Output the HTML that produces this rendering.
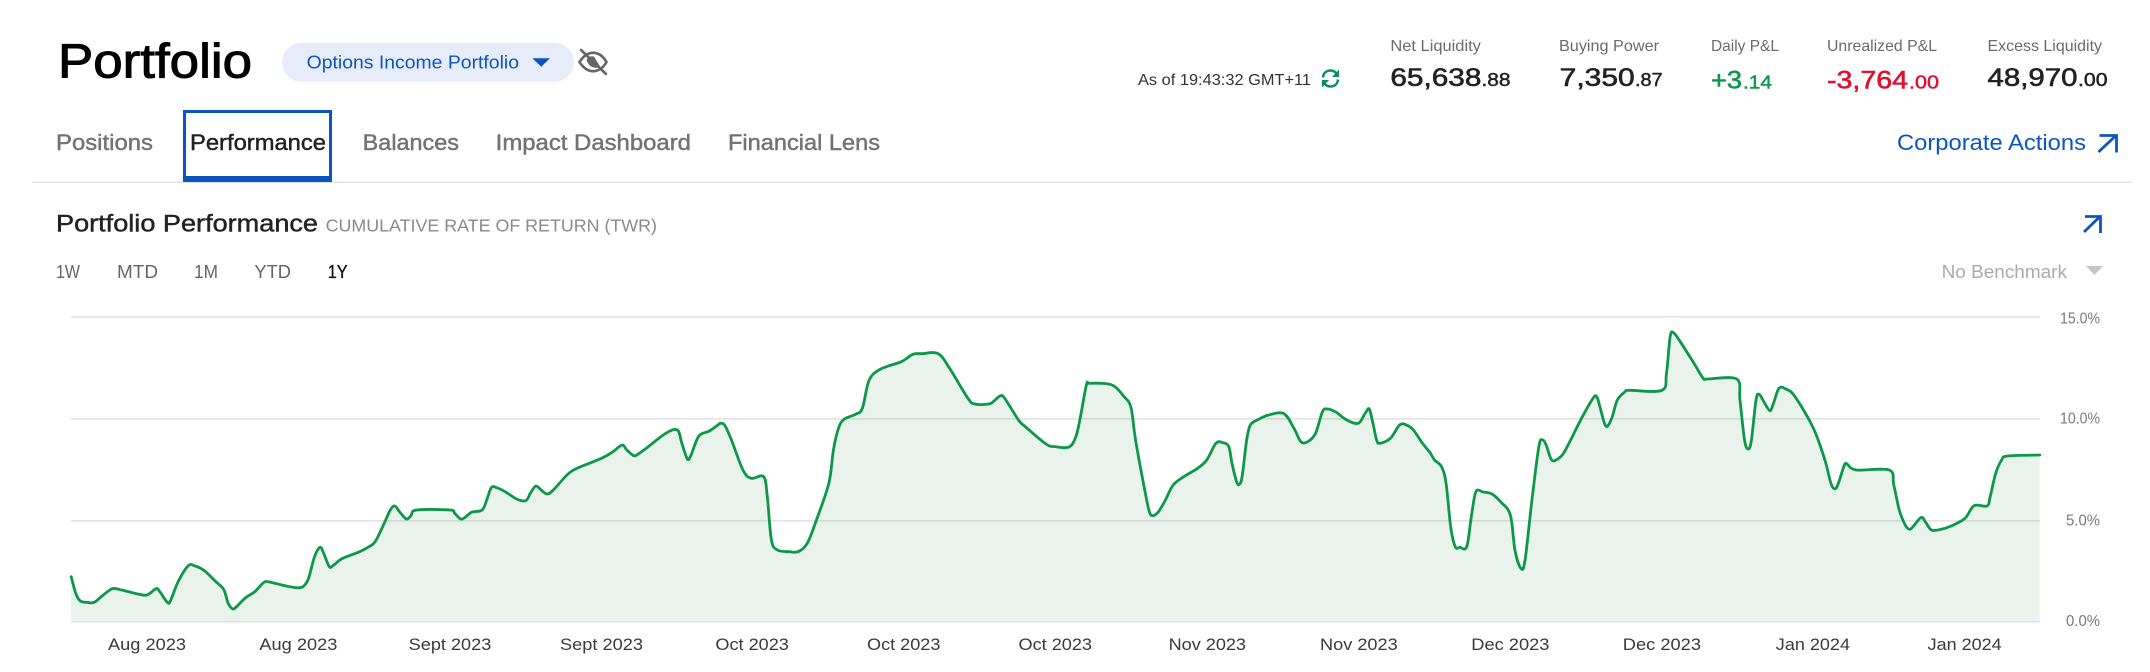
<!DOCTYPE html>
<html lang="en">
<head>
<meta charset="utf-8">
<title>Portfolio</title>
<style>
html,body{margin:0;padding:0;background:#fff;width:2150px;height:672px;overflow:hidden}
svg{display:block}
text{font-family:"Liberation Sans",Arial,sans-serif;white-space:pre}
.tab{font-size:22px;fill:#737373;stroke:#737373;stroke-width:.45px}
.rng{font-size:18px;fill:#666}
.lab{font-size:16px;fill:#6b6b6b}
.big{font-size:25px;fill:#222;stroke:#222;stroke-width:.6px}
.sm{font-size:18px;fill:#222;stroke:#222;stroke-width:.45px}
.xl{font-size:17px;fill:#3a3a3a}
.yl{font-size:16px;fill:#7a7a7a}
.c{fill:#e9f3ec;stroke:none}
.l{fill:none;stroke:#0c9848;stroke-width:2.8px;stroke-linejoin:round;stroke-linecap:round;vector-effect:non-scaling-stroke}
</style>
</head>
<body>
<svg xmlns="http://www.w3.org/2000/svg" width="2150" height="672" viewBox="0 0 2150 672">
<rect width="2150" height="672" fill="#fff"/>

<!-- Header -->
<text x="58" y="77.3" font-size="48" fill="#000" stroke="#000" stroke-width="1" textLength="194" lengthAdjust="spacingAndGlyphs">Portfolio</text>
<rect x="282" y="42.7" width="292" height="39" rx="19.5" fill="#e7edf8"/>
<text x="306.7" y="68.3" font-size="18.5" fill="#0b55c0" textLength="212.3" lengthAdjust="spacingAndGlyphs">Options Income Portfolio</text>
<path d="M532.3 58.3H550L541.2 66.8Z" fill="#0b55c0"/>
<!-- hidden eye -->
<g fill="none" stroke="#666" stroke-width="2.6" stroke-linecap="round">
<path d="M579.5 62C584 55 588.5 52.8 593 52.8C597.5 52.8 602.5 55 606.5 62C602.5 69 597.5 71.2 593 71.2C588.5 71.2 584 69 579.5 62Z"/>
<path d="M581 50L606 74"/>
</g>
<path d="M586.5 60C588 56.5 591 56 594 56.5L600 66.5C596 69 589 68 586.5 60Z" fill="#666"/>

<!-- As of -->
<text x="1138" y="85" font-size="15.5" fill="#333" textLength="173" lengthAdjust="spacingAndGlyphs">As of 19:43:32 GMT+11</text>
<g fill="none" stroke="#0e8a6e" stroke-width="2.5">
<path d="M1323 77.5C1323.5 72.5 1327 70.5 1330.500 70.5C1333 70.5 1335 71.500 1336.5 73.5"/>
<path d="M1338 79.5C1337.5 84.5 1334 86.5 1330.5 86.5C1328 86.5 1326 85.5 1324.5 83.5"/>
</g>
<path d="M1339 69.5V77H1332Z M1322 87.5V80H1329Z" fill="#0e8a6e"/>

<!-- Metrics -->
<text class="lab" x="1390.4" y="51" textLength="90.5" lengthAdjust="spacingAndGlyphs">Net Liquidity</text>
<text class="big" x="1390.4" y="86" textLength="91" lengthAdjust="spacingAndGlyphs">65,638</text>
<text class="sm" x="1481.5" y="86" textLength="29" lengthAdjust="spacingAndGlyphs">.88</text>

<text class="lab" x="1559" y="51" textLength="100" lengthAdjust="spacingAndGlyphs">Buying Power</text>
<text class="big" x="1559.7" y="86" textLength="75" lengthAdjust="spacingAndGlyphs">7,350</text>
<text class="sm" x="1635" y="86" textLength="27.6" lengthAdjust="spacingAndGlyphs">.87</text>

<text class="lab" x="1711" y="51" textLength="68" lengthAdjust="spacingAndGlyphs">Daily P&amp;L</text>
<text class="big" x="1711" y="88.3" style="fill:#0c9848;stroke:#0c9848" textLength="31" lengthAdjust="spacingAndGlyphs">+3</text>
<text class="sm" x="1743" y="88.3" style="fill:#0c9848;stroke:#0c9848" textLength="29" lengthAdjust="spacingAndGlyphs">.14</text>

<text class="lab" x="1827" y="51" textLength="110" lengthAdjust="spacingAndGlyphs">Unrealized P&amp;L</text>
<text class="big" x="1827" y="88.3" style="fill:#e0102f;stroke:#e0102f" textLength="81" lengthAdjust="spacingAndGlyphs">-3,764</text>
<text class="sm" x="1909" y="88.3" style="fill:#e0102f;stroke:#e0102f" textLength="30" lengthAdjust="spacingAndGlyphs">.00</text>

<text class="lab" x="1987.5" y="51" textLength="114.5" lengthAdjust="spacingAndGlyphs">Excess Liquidity</text>
<text class="big" x="1987.5" y="86" textLength="90" lengthAdjust="spacingAndGlyphs">48,970</text>
<text class="sm" x="2078" y="86" textLength="29.5" lengthAdjust="spacingAndGlyphs">.00</text>

<!-- Tabs -->
<text class="tab" x="56" y="150" textLength="97" lengthAdjust="spacingAndGlyphs">Positions</text>
<text class="tab" x="190" y="150" style="fill:#222;stroke:#222" textLength="136" lengthAdjust="spacingAndGlyphs">Performance</text>
<text class="tab" x="362.7" y="150" textLength="96.3" lengthAdjust="spacingAndGlyphs">Balances</text>
<text class="tab" x="495.7" y="150" textLength="195.3" lengthAdjust="spacingAndGlyphs">Impact Dashboard</text>
<text class="tab" x="728" y="150" textLength="152" lengthAdjust="spacingAndGlyphs">Financial Lens</text>
<rect x="32" y="181.5" width="2100" height="1.5" fill="#e4e4e4"/>
<path d="M183 110H332V182H183Z M186 113V176H329V113Z" fill="#0b55c0" fill-rule="evenodd"/>

<text x="1897" y="150" font-size="22.5" fill="#0b55c0" textLength="189" lengthAdjust="spacingAndGlyphs">Corporate Actions</text>
<g fill="none" stroke="#0b55c0" stroke-width="2.8">
<path d="M2098.5 152L2116 135.5M2099.5 135.5H2116.5V152.5"/>
<path d="M2084 232L2100 216.5M2085 216.5H2100.5V233"/>
</g>

<!-- Section heading -->
<text x="56" y="231.7" font-size="24" fill="#222" stroke="#222" stroke-width=".45" textLength="262" lengthAdjust="spacingAndGlyphs">Portfolio Performance</text>
<text x="325.6" y="231.7" font-size="17.5" fill="#8a8a8a" textLength="331.4" lengthAdjust="spacingAndGlyphs">CUMULATIVE RATE OF RETURN (TWR)</text>

<text class="rng" x="56" y="278" textLength="24" lengthAdjust="spacingAndGlyphs">1W</text>
<text class="rng" x="117" y="278" textLength="41" lengthAdjust="spacingAndGlyphs">MTD</text>
<text class="rng" x="194" y="278" textLength="24" lengthAdjust="spacingAndGlyphs">1M</text>
<text class="rng" x="254.4" y="278" textLength="36.6" lengthAdjust="spacingAndGlyphs">YTD</text>
<text class="rng" x="327.7" y="278" style="fill:#111;stroke:#111;stroke-width:.3px" textLength="20" lengthAdjust="spacingAndGlyphs">1Y</text>

<text x="1941.6" y="278" font-size="18" fill="#aaa" textLength="125.4" lengthAdjust="spacingAndGlyphs">No Benchmark</text>
<path d="M2086 266H2103L2094.5 275Z" fill="#c6c6c6"/>

<!-- Chart fill -->
<g transform="translate(0,300) scale(.45918,.33333)">
<polygon class="c" points="155,830 165,880 175,903 190,907 205,907 225,885 245,866 265,870 300,882 320,885 340,866 348,875 365,908 372,900 388,845 410,797 425,798 445,812 470,845 487,868 497,910 507,927 515,920 535,893 555,875 575,847 590,847 620,857 645,863 660,860 672,835 685,770 697,742 705,760 717,800 725,797 745,776 780,757 800,743 817,725 835,675 850,630 860,618 870,635 885,657 895,647 907,630 980,630 990,640 1003,657 1012,653 1027,637 1050,630 1060,600 1070,563 1082,563 1100,575 1125,597 1145,602 1155,580 1167,558 1180,572 1192,582 1205,570 1237,522 1260,503 1310,475 1335,455 1355,435 1365,450 1380,467 1390,462 1410,442 1450,400 1475,390 1485,430 1497,477 1505,465 1522,408 1545,393 1570,370 1570,966 155,966"/>
</g>
<g transform="translate(720,300) scale(.45918,.33333)">
<polygon class="c" points="0,370 10,375 25,420 50,510 68,535 95,530 103,590 112,720 125,750 150,755 170,755 190,730 210,660 237,550 247,450 258,385 270,358 295,343 310,325 325,240 350,207 395,185 420,163 440,161 475,161 500,205 540,295 555,312 585,312 595,305 610,288 620,295 650,360 665,380 710,432 730,440 760,441 775,410 785,350 798,255 805,250 840,251 860,260 880,290 895,322 905,420 925,570 935,635 943,647 955,635 970,600 987,555 1010,530 1040,505 1060,480 1080,430 1095,428 1108,440 1115,490 1125,545 1131,553 1137,530 1147,420 1155,375 1170,360 1195,345 1228,341 1250,385 1265,425 1280,425 1297,400 1312,335 1322,327 1340,335 1365,360 1390,370 1405,340 1414,327 1422,370 1430,420 1437,430 1460,415 1480,375 1495,375 1510,390 1530,430 1548,460 1548,966 0,966"/>
</g>
<g transform="translate(1430,300) scale(.45918,.33333)">
<polygon class="c" points="0,457 10,480 25,500 35,550 45,680 55,740 65,742 80,740 90,650 100,575 115,576 135,582 155,607 175,645 185,750 198,805 207,780 222,600 237,440 245,420 253,435 265,480 280,475 295,450 330,355 355,295 363,290 370,320 380,370 387,378 397,350 408,300 425,275 435,271 505,271 515,220 523,110 530,98 545,125 575,190 595,235 605,237 668,237 675,300 685,420 693,447 700,420 710,300 717,283 727,305 740,332 748,310 760,265 775,267 795,290 835,385 860,480 872,545 880,566 888,555 902,497 908,492 928,510 1000,510 1010,555 1022,630 1035,675 1045,688 1055,675 1070,652 1080,668 1092,690 1110,689 1135,678 1165,655 1185,617 1213,618 1220,590 1232,520 1245,480 1258,468 1328,465 1328,966 0,966"/>
</g>

<!-- Grid -->
<rect x="71" y="316" width="1969" height="1.7" fill="#000" fill-opacity=".105"/>
<rect x="71" y="418" width="1969" height="1.7" fill="#000" fill-opacity=".105"/>
<rect x="71" y="520" width="1969" height="1.7" fill="#000" fill-opacity=".105"/>
<rect x="71" y="621" width="1969" height="1.5" fill="#d6e0f3"/>

<!-- Chart line -->
<g transform="translate(0,300) scale(.45918,.33333)">
<polyline class="l" points="155,830 165,880 175,903 190,907 205,907 225,885 245,866 265,870 300,882 320,885 340,866 348,875 365,908 372,900 388,845 410,797 425,798 445,812 470,845 487,868 497,910 507,927 515,920 535,893 555,875 575,847 590,847 620,857 645,863 660,860 672,835 685,770 697,742 705,760 717,800 725,797 745,776 780,757 800,743 817,725 835,675 850,630 860,618 870,635 885,657 895,647 907,630 980,630 990,640 1003,657 1012,653 1027,637 1050,630 1060,600 1070,563 1082,563 1100,575 1125,597 1145,602 1155,580 1167,558 1180,572 1192,582 1205,570 1237,522 1260,503 1310,475 1335,455 1355,435 1365,450 1380,467 1390,462 1410,442 1450,400 1475,390 1485,430 1497,477 1505,465 1522,408 1545,393 1568,370"/>
</g>
<g transform="translate(720,300) scale(.45918,.33333)">
<polyline class="l" points="0,370 10,375 25,420 50,510 68,535 95,530 103,590 112,720 125,750 150,755 170,755 190,730 210,660 237,550 247,450 258,385 270,358 295,343 310,325 325,240 350,207 395,185 420,163 440,161 475,161 500,205 540,295 555,312 585,312 595,305 610,288 620,295 650,360 665,380 710,432 730,440 760,441 775,410 785,350 798,255 805,250 840,251 860,260 880,290 895,322 905,420 925,570 935,635 943,647 955,635 970,600 987,555 1010,530 1040,505 1060,480 1080,430 1095,428 1108,440 1115,490 1125,545 1131,553 1137,530 1147,420 1155,375 1170,360 1195,345 1228,341 1250,385 1265,425 1280,425 1297,400 1312,335 1322,327 1340,335 1365,360 1390,370 1405,340 1414,327 1422,370 1430,420 1437,430 1460,415 1480,375 1495,375 1510,390 1530,430 1546,457"/>
</g>
<g transform="translate(1430,300) scale(.45918,.33333)">
<polyline class="l" points="0,457 10,480 25,500 35,550 45,680 55,740 65,742 80,740 90,650 100,575 115,576 135,582 155,607 175,645 185,750 198,805 207,780 222,600 237,440 245,420 253,435 265,480 280,475 295,450 330,355 355,295 363,290 370,320 380,370 387,378 397,350 408,300 425,275 435,271 505,271 515,220 523,110 530,98 545,125 575,190 595,235 605,237 668,237 675,300 685,420 693,447 700,420 710,300 717,283 727,305 740,332 748,310 760,265 775,267 795,290 835,385 860,480 872,545 880,566 888,555 902,497 908,492 928,510 1000,510 1010,555 1022,630 1035,675 1045,688 1055,675 1070,652 1080,668 1092,690 1110,689 1135,678 1165,655 1185,617 1213,618 1220,590 1232,520 1245,480 1258,468 1328,465"/>
</g>

<!-- Y labels -->
<text class="yl" x="2060" y="323.3" textLength="40" lengthAdjust="spacingAndGlyphs">15.0%</text>
<text class="yl" x="2060" y="423.3" textLength="40" lengthAdjust="spacingAndGlyphs">10.0%</text>
<text class="yl" x="2066" y="525.3" textLength="34" lengthAdjust="spacingAndGlyphs">5.0%</text>
<text class="yl" x="2066" y="626" textLength="34" lengthAdjust="spacingAndGlyphs">0.0%</text>

<!-- X labels -->
<text class="xl" x="108" y="650" textLength="78" lengthAdjust="spacingAndGlyphs">Aug 2023</text>
<text class="xl" x="259.4" y="650" textLength="78" lengthAdjust="spacingAndGlyphs">Aug 2023</text>
<text class="xl" x="408.7" y="650" textLength="82.6" lengthAdjust="spacingAndGlyphs">Sept 2023</text>
<text class="xl" x="560" y="650" textLength="83" lengthAdjust="spacingAndGlyphs">Sept 2023</text>
<text class="xl" x="715.4" y="650" textLength="73.5" lengthAdjust="spacingAndGlyphs">Oct 2023</text>
<text class="xl" x="867" y="650" textLength="73.4" lengthAdjust="spacingAndGlyphs">Oct 2023</text>
<text class="xl" x="1018.5" y="650" textLength="73.5" lengthAdjust="spacingAndGlyphs">Oct 2023</text>
<text class="xl" x="1168.6" y="650" textLength="77.4" lengthAdjust="spacingAndGlyphs">Nov 2023</text>
<text class="xl" x="1320" y="650" textLength="77.7" lengthAdjust="spacingAndGlyphs">Nov 2023</text>
<text class="xl" x="1471.3" y="650" textLength="78.1" lengthAdjust="spacingAndGlyphs">Dec 2023</text>
<text class="xl" x="1622.8" y="650" textLength="78.2" lengthAdjust="spacingAndGlyphs">Dec 2023</text>
<text class="xl" x="1775.8" y="650" textLength="74.2" lengthAdjust="spacingAndGlyphs">Jan 2024</text>
<text class="xl" x="1927.7" y="650" textLength="74" lengthAdjust="spacingAndGlyphs">Jan 2024</text>
</svg>
<script>
(function(){
  var NS="http://www.w3.org/2000/svg";
  function parse(el){
    return el.getAttribute("points").trim().split(/\s+/).map(function(s){
      var a=s.split(",");return [+a[0],+a[1]];
    });
  }
  function curve(p){
    var d="M"+p[0][0]+" "+p[0][1];
    for(var i=0;i<p.length-1;i++){
      var p0=p[i>0?i-1:0],p1=p[i],p2=p[i+1],p3=p[i+2<p.length?i+2:i+1];
      var c1x=p1[0]+(p2[0]-p0[0])/6,c1y=p1[1]+(p2[1]-p0[1])/6;
      var c2x=p2[0]-(p3[0]-p1[0])/6,c2y=p2[1]-(p3[1]-p1[1])/6;
      d+="C"+c1x.toFixed(1)+" "+c1y.toFixed(1)+" "+c2x.toFixed(1)+" "+c2y.toFixed(1)+" "+p2[0]+" "+p2[1];
    }
    return d;
  }
  var i,els=document.querySelectorAll("polyline.l");
  for(i=0;i<els.length;i++){
    var q=document.createElementNS(NS,"path");
    q.setAttribute("class","l");
    q.setAttribute("d",curve(parse(els[i])));
    els[i].parentNode.replaceChild(q,els[i]);
  }
  els=document.querySelectorAll("polygon.c");
  for(i=0;i<els.length;i++){
    var pts=parse(els[i]),n=pts.length,r=document.createElementNS(NS,"path");
    r.setAttribute("class","c");
    r.setAttribute("d",curve(pts.slice(0,n-2))+"L"+pts[n-2][0]+" "+pts[n-2][1]+"L"+pts[n-1][0]+" "+pts[n-1][1]+"Z");
    els[i].parentNode.replaceChild(r,els[i]);
  }
})();
</script>
</body>
</html>
